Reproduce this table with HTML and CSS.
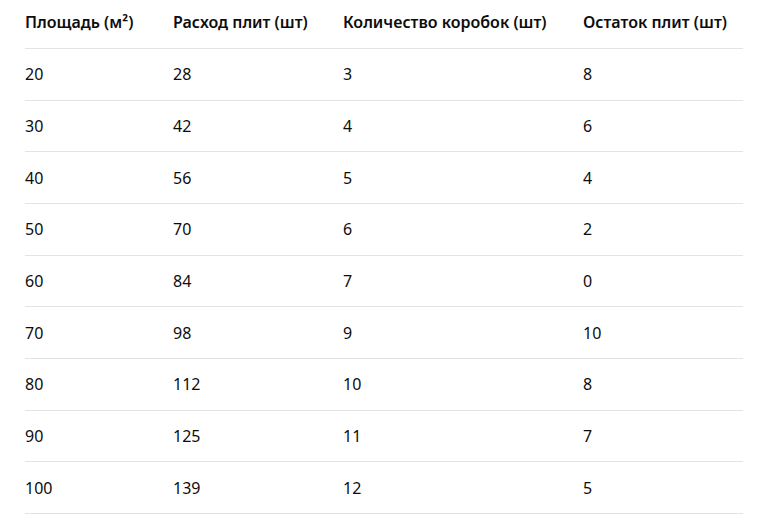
FILE: index.html
```html
<!DOCTYPE html>
<html lang="ru">
<head>
<meta charset="utf-8">
<link rel="stylesheet" href="styles.css">
</head>
<body>
<div class="data" role="table">
  <div class="row head" role="row">
    <div class="cell" role="columnheader">Площадь (м²)</div>
    <div class="cell" role="columnheader">Расход плит (шт)</div>
    <div class="cell" role="columnheader">Количество коробок (шт)</div>
    <div class="cell" role="columnheader">Остаток плит (шт)</div>
  </div>
  <div class="row" role="row"><div class="cell">20</div><div class="cell">28</div><div class="cell">3</div><div class="cell">8</div></div>
  <div class="row" role="row"><div class="cell">30</div><div class="cell">42</div><div class="cell">4</div><div class="cell">6</div></div>
  <div class="row" role="row"><div class="cell">40</div><div class="cell">56</div><div class="cell">5</div><div class="cell">4</div></div>
  <div class="row" role="row"><div class="cell">50</div><div class="cell">70</div><div class="cell">6</div><div class="cell">2</div></div>
  <div class="row" role="row"><div class="cell">60</div><div class="cell">84</div><div class="cell">7</div><div class="cell">0</div></div>
  <div class="row" role="row"><div class="cell">70</div><div class="cell">98</div><div class="cell">9</div><div class="cell">10</div></div>
  <div class="row" role="row"><div class="cell">80</div><div class="cell">112</div><div class="cell">10</div><div class="cell">8</div></div>
  <div class="row" role="row"><div class="cell">90</div><div class="cell">125</div><div class="cell">11</div><div class="cell">7</div></div>
  <div class="row" role="row"><div class="cell">100</div><div class="cell">139</div><div class="cell">12</div><div class="cell">5</div></div>
</div>
</body>
</html>
```

FILE: styles.css
```css
html, body {
  margin: 0;
  padding: 0;
  background: #ffffff;
}
body {
  padding: 0 18px 0 25px;
  font-family: "Noto Sans", "Open Sans", sans-serif;
  font-size: 16px;
  color: #0d0d0d;
}
.data {
  width: 718px;
}
.row {
  display: grid;
  grid-template-columns: 148px 170px 240px 160px;
  align-items: center;
  height: 51.67px;
  box-sizing: border-box;
  border-bottom: 1px solid #e3e3e3;
}
.row.head {
  height: 49px;
  padding-bottom: 4px;
  font-weight: 600;
}
.cell {
  white-space: nowrap;
}
```
